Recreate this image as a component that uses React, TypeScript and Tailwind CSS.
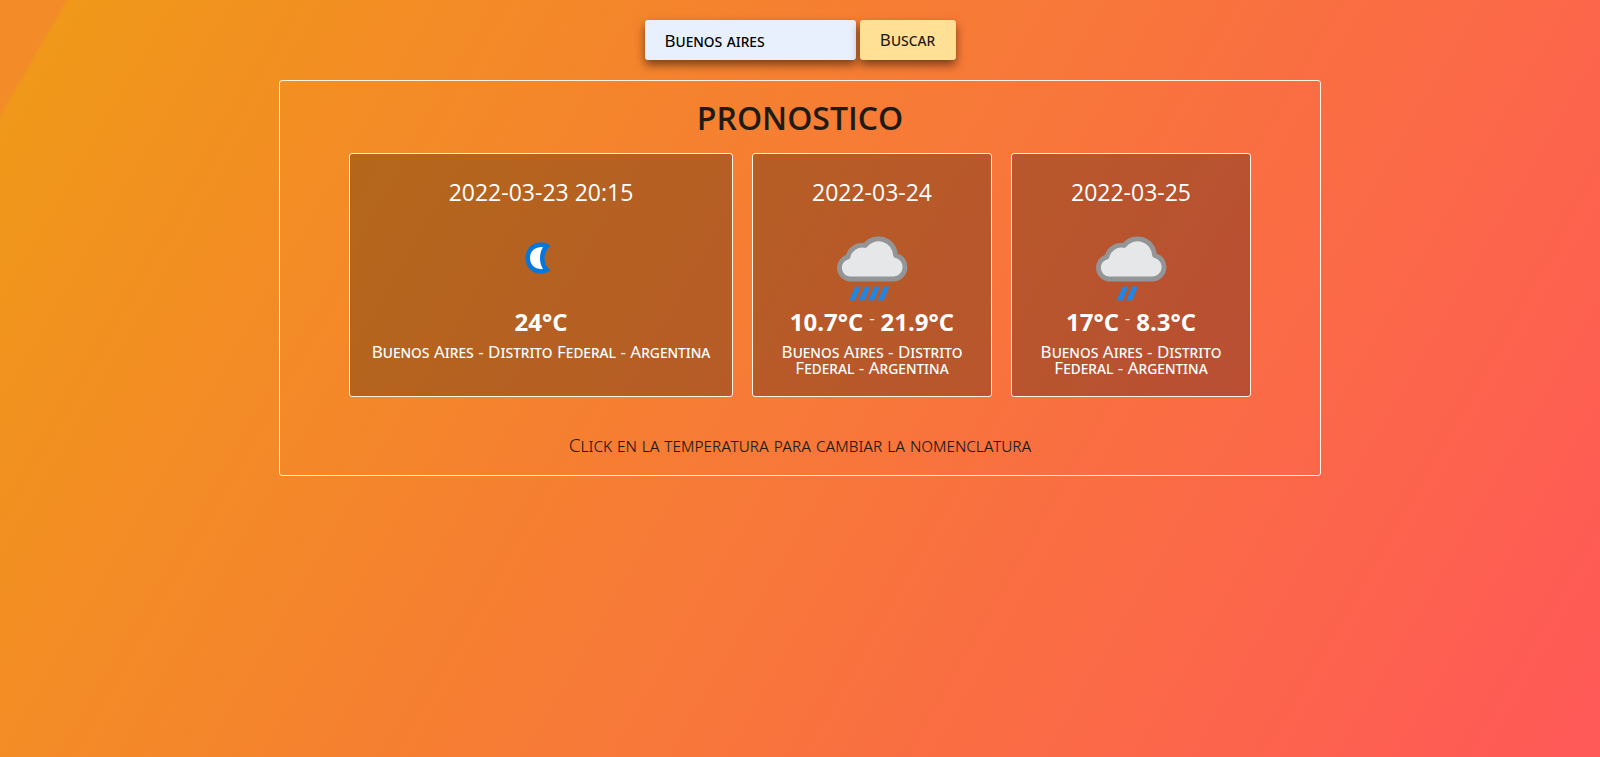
import { useState } from "react";
import type { FormEvent } from "react";

type Day = { date: string; temps: number[]; icon: "moon" | "heavy" | "light"; label: string };

const place = "Buenos Aires - Distrito Federal - Argentina";

const days: Day[] = [
  { date: "2022-03-23 20:15", temps: [24], icon: "moon", label: "Despejado" },
  { date: "2022-03-24", temps: [10.7, 21.9], icon: "heavy", label: "Lluvia fuerte" },
  { date: "2022-03-25", temps: [17, 8.3], icon: "light", label: "Llovizna" },
];

function WeatherIcon({ icon, label }: { icon: Day["icon"]; label: string }) {
  const drops = icon === "heavy" ? [26, 35.5, 45, 54.5] : [34.5, 44];
  return (
    <svg role="img" aria-label={label} viewBox="0 0 96 96" className="size-24">
      {icon === "moon" ? (
        <>
          <path d="M47.5 28.5C51.5 28.5 55.5 29.6 57.5 32.2C49.5 38 49.5 50.5 57.5 56.3C55 58.8 51.5 59.6 47.5 59.6C39 59.6 32.5 53 32.5 44C32.5 35.2 39 28.5 47.5 28.5Z" fill="#0675dc" />
          <path d="M50 33.1C46 40 46 48.5 50 55.1C42 55.8 37 50.8 37 44.1C37 37.4 42 32.5 50 33.1Z" fill="#fff" />
        </>
      ) : (
        <>
          <path
            d="M25.5 65A11.3 11.3 0 0 1 24 42.8A14.5 14.5 0 0 1 41 31.5A17 17 0 0 1 71.5 41.3A12 12 0 0 1 70 65Z"
            fill="#e6e7e9"
            stroke="#939597"
            strokeWidth="4.8"
            strokeLinejoin="round"
          />
          {drops.map((x) => (
            <path key={x} d={`M${x + 5.5} 72.5H${x + 11}L${x + 5} 86.5H${x - 1}Z`} fill="#2385e2" />
          ))}
        </>
      )}
    </svg>
  );
}

export default function App() {
  const [city, setCity] = useState("Buenos aires");
  const [celsius, setCelsius] = useState(true);
  const format = (t: number) => (celsius ? `${t}°C` : `${Math.round((t * 9) / 5 + 32)}°F`);

  return (
    <main className="min-h-screen bg-[linear-gradient(120deg,#f38b29_0,#f38b29_56px,#f09819_60px,#ff5858_100%)] pt-5 font-['Open_Sans','Noto_Sans',sans-serif] text-[#1f1b16]">
      <form className="flex justify-center gap-1" onSubmit={(e: FormEvent) => e.preventDefault()}>
        <input
          aria-label="Ciudad"
          value={city}
          onChange={(e) => setCity(e.target.value)}
          className="h-10 w-[211px] rounded-[3px] bg-[#e8f0fe] px-5 font-['Noto_Sans',sans-serif] text-[17px] font-normal text-black shadow-[0_5px_10px_rgba(0,0,0,0.5)] outline-none [font-variant:small-caps]"
        />
        <button className="h-10 w-24 rounded-[3px] bg-[#ffe094] font-['Noto_Sans',sans-serif] text-[17px] shadow-[0_5px_10px_rgba(0,0,0,0.5)] [font-variant:small-caps]">
          Buscar
        </button>
      </form>

      <section className="mx-auto mt-5 box-content w-[65%] rounded-[3px] border border-[#fff3e4] pt-[17px] pb-[18px] text-center">
        <h1 className="text-[32px] leading-10 font-semibold">PRONOSTICO</h1>
        <div className="mt-[15px] flex justify-center gap-[19px]">
          {days.map((day, i) => (
            <article
              key={day.date}
              className={`${i === 0 ? "w-96" : "w-60"} flex h-[244px] flex-col items-center rounded-[3px] border border-[#fff3e4] bg-black/26 px-4 pt-5 text-white`}
            >
              <h2 className="text-[23px] leading-9">{day.date}</h2>
              <div className="pt-1">
                <WeatherIcon icon={day.icon} label={day.label} />
              </div>
              <p className="flex h-6 items-center justify-center gap-1.5">
                {day.temps.map((t, n) => (
                  <span key={n} className="flex items-center gap-1.5">
                    {n > 0 && <span className="pb-2 text-base leading-4">-</span>}
                    <button onClick={() => setCelsius(!celsius)} className="cursor-pointer text-2xl leading-6 font-bold">
                      {format(t)}
                    </button>
                  </span>
                ))}
              </p>
              <p className="mt-2.5 font-['Noto_Sans',sans-serif] text-[17px] leading-4 [font-variant:small-caps]">{place}</p>
            </article>
          ))}
        </div>
        <p className="mt-9 font-['Noto_Sans',sans-serif] text-[19px] leading-6 font-light [font-variant:small-caps]">
          Click en la temperatura para cambiar la nomenclatura
        </p>
      </section>
    </main>
  );
}
